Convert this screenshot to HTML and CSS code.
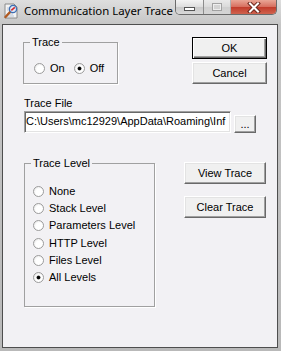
FILE: index.html
```html
<!DOCTYPE html>
<html lang="en">
<head>
    <meta charset="UTF-8">
    <meta name="viewport" content="width=device-width, initial-scale=1.0">
    <title>Communication Layer Trace</title>
    <link rel="stylesheet" href="styles.css">
</head>
<body>
    <div class="window">
        <div class="titlebar">
            <svg class="app-icon" width="16" height="16" viewBox="0 0 16 16">
                <path d="M2 1h9l3 3v11H2z" fill="#f4f4f4" stroke="#8a8a8a"/>
                <path d="M4 5h5M4 7h4M4 11h6M4 13h7" stroke="#b8c4d6"/>
                <line x1="7.5" y1="8.5" x2="2.5" y2="14" stroke="#b05a22" stroke-width="2.4" stroke-linecap="round"/>
                <circle cx="10" cy="6" r="3.6" fill="#dfe9f6" stroke="#3d6fb4" stroke-width="1.3"/>
                <path d="M8.3 7.4l3.5-3" stroke="#d6262a" stroke-width="1.6"/>
            </svg>
            <span class="title">Communication Layer Trace</span>
            <div class="caption-buttons">
                <span class="cap cap-min"><i></i></span>
                <span class="cap cap-max"><i></i></span>
                <span class="cap cap-close">
                    <svg width="14" height="11" viewBox="0 0 14 11">
                        <path d="M3 1.5l8 8M11 1.5l-8 8" stroke="#6e2a20" stroke-width="4" stroke-linecap="square"/>
                        <path d="M3 1.5l8 8M11 1.5l-8 8" stroke="#fff" stroke-width="2" stroke-linecap="square"/>
                    </svg>
                </span>
            </div>
        </div>

        <div class="client">
            <div class="row top-row">
                <fieldset class="group trace-group">
                    <legend>Trace</legend>
                    <div class="radio-line">
                        <label class="radio"><span class="dot"></span>On</label>
                        <label class="radio checked"><span class="dot"></span>Off</label>
                    </div>
                </fieldset>
                <div class="btn-col">
                    <button class="btn default">OK</button>
                    <button class="btn">Cancel</button>
                </div>
            </div>

            <div class="file-section">
                <div class="field-label">Trace File</div>
                <div class="file-row">
                    <div class="textbox">C:\Users\mc12929\AppData\Roaming\Inf</div>
                    <button class="btn btn-browse">...</button>
                </div>
            </div>

            <div class="row bottom-row">
                <fieldset class="group level-group">
                    <legend>Trace Level</legend>
                    <div class="radio-list">
                        <label class="radio"><span class="dot"></span>None</label>
                        <label class="radio"><span class="dot"></span>Stack Level</label>
                        <label class="radio"><span class="dot"></span>Parameters Level</label>
                        <label class="radio"><span class="dot"></span>HTTP Level</label>
                        <label class="radio"><span class="dot"></span>Files Level</label>
                        <label class="radio checked"><span class="dot"></span>All Levels</label>
                    </div>
                </fieldset>
                <div class="btn-col wide">
                    <button class="btn">View Trace</button>
                    <button class="btn">Clear Trace</button>
                </div>
            </div>
        </div>
    </div>
</body>
</html>
```

FILE: styles.css
```css
* {
    margin: 0;
    padding: 0;
    box-sizing: border-box;
}

html, body {
    width: 100%;
    height: 100%;
    background-color: #ffffff;
}

body {
    font-family: "Liberation Sans", Arial, sans-serif;
    font-size: 11px;
    color: #000;
}

.window {
    width: 281px;
    height: 351px;
    display: flex;
    flex-direction: column;
    background: linear-gradient(#dedede, #c6c6c6 24px, #b9b9b9);
}

/* title bar */

.titlebar {
    height: 24px;
    display: flex;
    align-items: flex-start;
    padding-left: 3px;
}

.app-icon {
    margin-top: 3px;
    flex-shrink: 0;
}

.title {
    margin-left: 5px;
    margin-top: 3px;
    font-family: "Noto Sans", "DejaVu Sans", sans-serif;
    font-size: 11.4px;
    line-height: 15px;
    white-space: nowrap;
}

.caption-buttons {
    flex-shrink: 0;
    margin-left: auto;
    margin-right: 4px;
    height: 15px;
    display: flex;
    border: 1px solid #6b6b6b;
    border-top: none;
    border-radius: 0 0 5px 5px;
    overflow: hidden;
}

.cap {
    height: 100%;
    display: flex;
    align-items: center;
    justify-content: center;
    background: linear-gradient(#f3f3f3, #dddddd 50%, #c9c9c9 51%, #d9d9d9);
    border-right: 1px solid #8c8c8c;
}

.cap-min {
    width: 28px;
}

.cap-min i {
    width: 11px;
    height: 4px;
    margin-top: 4px;
    background: #fff;
    border: 1px solid #555;
}

.cap-max {
    width: 27px;
    opacity: 0.55;
}

.cap-max i {
    width: 10px;
    height: 8px;
    border: 1px solid #777;
    box-shadow: inset 0 0 0 1px #fff;
    background: #d0d0d0;
}

.cap-close {
    width: 45px;
    border-right: none;
    background: linear-gradient(#e9a696, #d66d5d 50%, #c13b2a 51%, #d0634f);
}

/* client area */

.client {
    flex: 1;
    margin: 0 3px 3px 2px;
    border: 1px solid #4e4e4e;
    background-color: #f2f1f4;
    padding: 11px 10px 0 20px;
}

.row {
    display: flex;
    justify-content: space-between;
    align-items: flex-start;
}

.group {
    border: 1px solid #a0a0a0;
    box-shadow: 1px 1px 0 #ffffff;
    min-width: 0;
}

.group legend {
    margin-left: 6px;
    padding: 0 2px;
    line-height: 12px;
    height: 12px;
}

.trace-group {
    width: 95px;
}

.radio-line {
    display: flex;
    gap: 9px;
    padding: 14px 0 8px 10px;
}

.radio {
    display: flex;
    align-items: center;
    height: 13px;
    line-height: 13px;
    white-space: nowrap;
}

.dot {
    position: relative;
    width: 11px;
    height: 11px;
    margin-right: 5px;
    border-radius: 50%;
    border: 1px solid #9c9c9c;
    background: radial-gradient(circle at 60% 60%, #ffffff 45%, #dedede);
}

.checked .dot::after {
    content: "";
    position: absolute;
    left: 3px;
    top: 3px;
    width: 3px;
    height: 3px;
    border-radius: 50%;
    background: #000;
    box-shadow: 0 0 0 0.5px #333;
}

/* buttons */

.btn-col {
    display: flex;
    flex-direction: column;
    gap: 3px;
    margin-top: 1px;
}

.btn {
    width: 75px;
    height: 22px;
    font-family: "Liberation Sans", Arial, sans-serif;
    font-size: 11px;
    color: #000;
    background-color: #f0f0f0;
    border: 1px solid;
    border-color: #ffffff #696969 #696969 #ffffff;
    box-shadow: inset -1px -1px 0 #a0a0a0, inset 1px 1px 0 #e3e3e3;
}

.btn.default {
    border-color: #000;
    box-shadow: inset 1px 1px 0 #ffffff, inset -1px -1px 0 #696969, inset -2px -2px 0 #a0a0a0;
}

/* trace file */

.file-section {
    margin-top: 13px;
    margin-left: 1px;
}

.field-label {
    line-height: 13px;
    margin-bottom: 1px;
}

.file-row {
    display: flex;
    align-items: flex-end;
}

.textbox {
    width: 207px;
    height: 22px;
    line-height: 18px;
    padding: 0 1px;
    background: #fff;
    border: 1px solid;
    border-color: #a0a0a0 #ffffff #ffffff #a0a0a0;
    box-shadow: inset 1px 1px 0 #696969, inset -1px -1px 0 #e3e3e3;
    white-space: nowrap;
    overflow: hidden;
}

.btn.btn-browse {
    width: 22px;
    height: 18px;
    margin-left: 3px;
    line-height: 12px;
}

/* trace level */

.bottom-row {
    margin-top: 24px;
    margin-left: 1px;
}

.level-group {
    width: 131px;
}

.radio-list {
    display: flex;
    flex-direction: column;
    padding: 14px 0 20px 8px;
}

.radio-list .radio {
    height: 17.2px;
}

.btn-col.wide {
    margin-top: 5px;
    margin-right: 1px;
    gap: 12px;
}

.btn-col.wide .btn {
    width: 82px;
}
```
